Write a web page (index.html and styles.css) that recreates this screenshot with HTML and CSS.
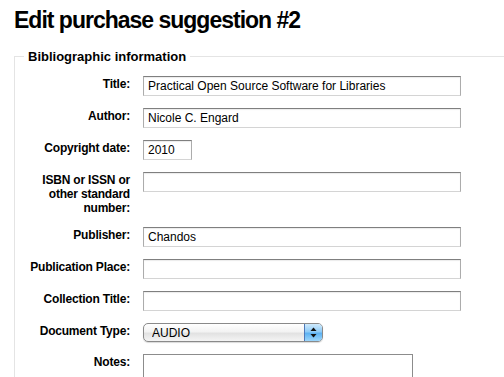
FILE: index.html
```html
<!DOCTYPE html>
<html lang="en">
<head>
  <meta charset="UTF-8">
  <meta name="viewport" content="width=device-width, initial-scale=1.0">
  <title>Edit purchase suggestion</title>
  <link rel="stylesheet" href="styles.css">
</head>
<body>
  <h1>Edit purchase suggestion #2</h1>

  <form class="suggestion-form">
    <fieldset class="biblio">
      <legend>Bibliographic information</legend>
      <div class="fields">
        <label for="title">Title:</label>
        <input type="text" id="title" class="wide" value="Practical Open Source Software for Libraries">

        <label for="author">Author:</label>
        <input type="text" id="author" class="wide" value="Nicole C. Engard">

        <label for="copyrightdate">Copyright date:</label>
        <input type="text" id="copyrightdate" class="short" value="2010">

        <label for="isbn">ISBN or ISSN or other standard number:</label>
        <input type="text" id="isbn" class="wide" value="">

        <label for="publisher">Publisher:</label>
        <input type="text" id="publisher" class="wide" value="Chandos">

        <label for="place">Publication Place:</label>
        <input type="text" id="place" class="wide" value="">

        <label for="collection">Collection Title:</label>
        <input type="text" id="collection" class="wide" value="">

        <label for="itemtype">Document Type:</label>
        <div class="select-wrap">
          <select id="itemtype" class="doc-type">
            <option>AUDIO</option>
            <option>BOOK</option>
            <option>DVD</option>
          </select>
          <span class="select-arrows">
            <svg width="7" height="11" viewBox="0 0 7 11">
              <path d="M3.5 0.5 L6.5 4 L0.5 4 Z" fill="#111"/>
              <path d="M0.5 7 L6.5 7 L3.5 10.5 Z" fill="#111"/>
            </svg>
          </span>
        </div>

        <label for="note">Notes:</label>
        <textarea id="note" class="notes"></textarea>
      </div>
    </fieldset>
  </form>
</body>
</html>
```

FILE: styles.css
```css
html {
  overflow: hidden;
}

body {
  font-family: "Liberation Sans", Arial, sans-serif;
  margin: 0;
  background: #fff;
  color: #000;
}

h1 {
  font-size: 23px;
  line-height: 26px;
  letter-spacing: -1px;
  margin: 7px 0 16px 14px;
}

.suggestion-form {
  margin: 0;
}

.biblio {
  margin: 0 -40px 0 14px;
  padding: 0 0 40px 0;
  border: 1px solid #e4e4e4;
}

.biblio legend {
  font-size: 13px;
  font-weight: bold;
  line-height: 15px;
  margin-left: 9px;
  padding: 0 4px;
}

.fields {
  display: grid;
  grid-template-columns: 115px 1fr;
  column-gap: 13px;
  row-gap: 12px;
  align-items: start;
  padding-top: 12px;
}

.fields label {
  font-size: 12px;
  font-weight: bold;
  line-height: 14px;
  letter-spacing: -0.2px;
  text-align: right;
  padding-top: 1px;
}

.fields input[type="text"] {
  box-sizing: border-box;
  height: 20px;
  margin: 0;
  padding: 2px 4px;
  font-family: "Liberation Sans", Arial, sans-serif;
  font-size: 12px;
  line-height: 14px;
  color: #000;
  border: 1px solid;
  border-color: #7f7f7f #acacac #d4d4d4 #acacac;
  box-shadow: inset 0 1px 1px rgba(0, 0, 0, 0.08);
  outline: none;
}

.fields .wide {
  width: 318px;
}

.fields .short {
  width: 49px;
}

.select-wrap {
  display: flex;
  box-sizing: border-box;
  width: 180px;
  height: 19px;
  border: 1px solid #8a8a8a;
  border-radius: 5px;
  overflow: hidden;
  background: linear-gradient(#ffffff, #f3f3f3 45%, #e2e2e2 55%, #f4f4f4);
  box-shadow: 0 1px 1px rgba(0, 0, 0, 0.15);
}

.doc-type {
  flex: 1;
  appearance: none;
  -webkit-appearance: none;
  border: none;
  background: transparent;
  margin: 0;
  padding: 0 0 0 8px;
  font-family: "Liberation Sans", Arial, sans-serif;
  font-size: 12px;
  color: #000;
  outline: none;
}

.select-arrows {
  display: flex;
  justify-content: center;
  align-items: center;
  width: 17px;
  border-left: 1px solid #4f79b8;
  background: linear-gradient(#cfeafc, #8fcbf7 45%, #5db2f2 55%, #9dd6fb);
}

.notes {
  box-sizing: border-box;
  width: 270px;
  height: 70px;
  margin: 0;
  border: 1px solid #8c8c8c;
  resize: none;
  font-family: "Liberation Sans", Arial, sans-serif;
  font-size: 12px;
}
```
